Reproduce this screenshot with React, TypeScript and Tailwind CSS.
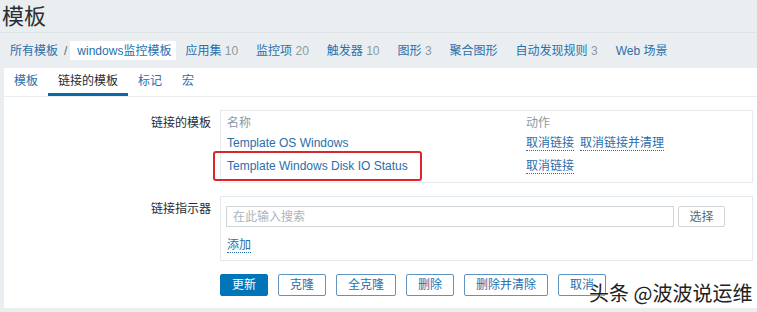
import React from "react";

const font = { fontFamily: '"Liberation Sans", "Noto Sans CJK SC", sans-serif' };

const navItems: { label: string; count?: string }[] = [
  { label: "应用集", count: "10" },
  { label: "监控项", count: "20" },
  { label: "触发器", count: "10" },
  { label: "图形", count: "3" },
  { label: "聚合图形" },
  { label: "自动发现规则", count: "3" },
  { label: "Web 场景" },
];

const tabs = ["模板", "链接的模板", "标记", "宏"];

const ActionLink = ({ children }: { children: React.ReactNode }) => (
  <span className="text-[#2a6eab] border-b border-dotted border-[#2a6eab] leading-[14px]">{children}</span>
);

const Btn = ({ children, primary }: { children: React.ReactNode; primary?: boolean }) => (
  <button
    className={
      primary
        ? "h-[22px] px-[11px] rounded-[2px] border border-[#0275b8] bg-[#0275b8] text-white text-[12px]"
        : "h-[22px] px-[11px] rounded-[2px] border border-[#5e93c2] bg-white text-[#2a6eab] text-[12px]"
    }
  >
    {children}
  </button>
);

export default function App() {
  return (
    <div style={font} className="relative w-[757px] h-[312px] overflow-hidden bg-[#ebeef0] text-[12px] text-[#1f2c33]">
      {/* header */}
      <div className="h-[33px] border-b border-[#dde2e5] pl-[2px] pt-[2px] text-[22px] leading-[30px] text-[#2a2f33]">模板</div>

      {/* breadcrumbs + nav */}
      <div className="h-[35px] flex items-center pl-[10px]">
        <span className="text-[#2a6eab]">所有模板</span>
        <span className="ml-[6px] mr-[3px] text-[#5a6a73]">/</span>
        <span className="h-[19px] flex items-center bg-white pl-[7px] pr-[5px] text-[#2a6eab]">windows监控模板</span>
        <div className="flex items-center">
          {navItems.map((n) => (
            <span key={n.label} className="px-[9px] text-[#2a6eab]">
              {n.label}
              {n.count && <span className="text-[#8a9aa3]"> {n.count}</span>}
            </span>
          ))}
        </div>
      </div>

      {/* panel */}
      <div className="ml-[4px] h-[240px] bg-white">
        <div className="h-[29px] flex border-b border-[#ebeef0]">
          {tabs.map((t, i) => (
            <div
              key={t}
              className={
                i === 1
                  ? "px-[10px] flex items-center border-b-[3px] border-[#0b6aa6] text-[#1f2c33]"
                  : "px-[10px] flex items-center border-b-[3px] border-transparent text-[#2a6eab]"
              }
            >
              {t}
            </div>
          ))}
        </div>

        <div className="pt-[13px] pr-[4px] flex flex-col gap-[13px]">
          {/* linked templates */}
          <div className="flex">
            <div className="w-[207px] text-right pt-[4px] text-[#1f2c33]">链接的模板</div>
            <div className="ml-[9px] flex-1 h-[73px] border border-[#e6eaec] pl-[6px] pt-[2px]">
              <div className="h-[19px] flex items-center text-[#8a9aa3]">
                <span className="w-[299px]">名称</span>
                <span>动作</span>
              </div>
              <div className="h-[22px] flex items-center">
                <span className="w-[299px] text-[#2a6eab]">Template OS Windows</span>
                <span className="flex gap-[6px]">
                  <ActionLink>取消链接</ActionLink>
                  <ActionLink>取消链接并清理</ActionLink>
                </span>
              </div>
              <div className="h-[24px] flex items-center">
                <span className="relative w-[299px] text-[#2a6eab]">
                  Template Windows Disk IO Status
                  <span className="absolute left-[-14px] top-[-6px] w-[209px] h-[30px] border-[2.5px] border-[#d8262c] rounded-[3px]" />
                </span>
                <ActionLink>取消链接</ActionLink>
              </div>
            </div>
          </div>

          {/* linked indicator */}
          <div className="flex">
            <div className="w-[207px] text-right pt-[4px] text-[#1f2c33]">链接指示器</div>
            <div className="ml-[9px] flex-1 h-[65px] border border-[#e6eaec] pl-[5px] pt-[9px]">
              <div className="flex gap-[4px]">
                <div className="w-[448px] h-[21px] border border-[#cfd6da] flex items-center pl-[6px] text-[#a9b5bb]">
                  在此输入搜索
                </div>
                <button className="w-[47px] h-[21px] border border-[#cfd6da] rounded-[2px] bg-white text-[#5a6a73] text-[12px]">
                  选择
                </button>
              </div>
              <div className="mt-[9px] pl-[1px]">
                <ActionLink>添加</ActionLink>
              </div>
            </div>
          </div>

          {/* buttons */}
          <div className="pl-[216px] flex gap-[10px]">
            <Btn primary>更新</Btn>
            <Btn>克隆</Btn>
            <Btn>全克隆</Btn>
            <Btn>删除</Btn>
            <Btn>删除并清除</Btn>
            <Btn>取消</Btn>
          </div>
        </div>
      </div>

      {/* watermark */}
      <div
        className="absolute left-[589px] top-[283px] text-[20px] leading-none text-[#222] [text-shadow:0_0_2px_#fff,0_0_1px_#fff]"
        style={{ fontFamily: '"Noto Sans CJK SC", sans-serif' }}
      >
        头条 @波波说运维
      </div>
    </div>
  );
}
